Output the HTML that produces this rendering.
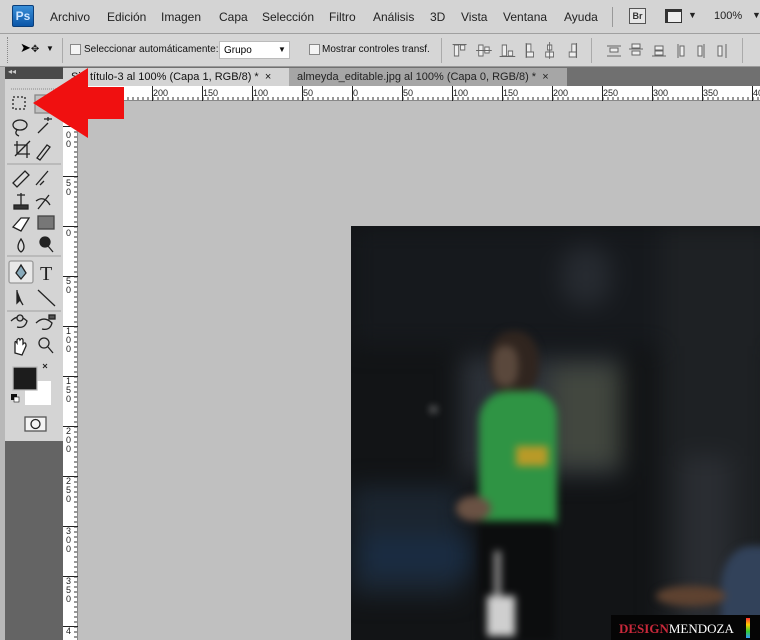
<!DOCTYPE html><html><head><meta charset="utf-8"><style>
*{margin:0;padding:0;box-sizing:border-box}
body{width:760px;height:640px;overflow:hidden;background:#c0c0c0;font-family:"Liberation Sans",sans-serif;position:relative}
.a{position:absolute}
.menu{left:0;top:0;width:760px;height:34px;background:#d4d4d4;border-bottom:1px solid #a0a0a0}
.menu span{position:absolute;top:10px;font-size:12px;color:#222}
.opt{left:0;top:34px;width:760px;height:33px;background:#d6d6d6;border-bottom:1px solid #9a9a9a}
.opt span{position:absolute;font-size:10px;color:#111;top:10px}
.cb{position:absolute;width:11px;height:11px;border:1px solid #888;background:#f4f4f4}
.sep{position:absolute;width:1px;background:#aaa}
.tabs{left:63px;top:67px;width:697px;height:19px;background:#707070}
</style></head><body>
<div class="a menu">
<div class="a" style="left:12px;top:5px;width:22px;height:22px;background:linear-gradient(#3a8fd8,#0b56a8);border:1px solid #0a3e7a;border-radius:2px;color:#cfe6ff;font-weight:bold;font-size:12px;text-align:center;line-height:20px">Ps</div>
<span style="left:50px">Archivo</span><span style="left:107px">Edición</span><span style="left:161px">Imagen</span><span style="left:219px">Capa</span><span style="left:262px">Selección</span><span style="left:329px">Filtro</span><span style="left:373px">Análisis</span><span style="left:430px">3D</span><span style="left:461px">Vista</span><span style="left:503px">Ventana</span><span style="left:564px">Ayuda</span>
<div class="a" style="left:612px;top:7px;width:1px;height:20px;background:#999"></div>
<div class="a" style="left:629px;top:8px;width:17px;height:16px;border:1px solid #555;background:#e6e6e6;font-size:9px;text-align:center;line-height:14px;font-weight:bold;color:#333">Br</div>
<div class="a" style="left:665px;top:9px;width:17px;height:14px;border:1px solid #333;border-top:3px solid #333;border-left:3px solid #333;background:#eee"></div>
<span style="left:688px;font-size:9px">▼</span>
<span style="left:714px;font-size:11px">100%</span><span style="left:752px;font-size:9px">▼</span>
</div>
<div class="a opt">
<div class="a" style="left:7px;top:3px;width:2px;height:26px;border-left:1px dotted #888"></div>
<div class="a" style="left:20px;top:6px;font-size:13px">➤<span style="font-size:10px;position:static">✥</span></div>
<span style="left:46px;font-size:8px">▼</span>
<div class="sep" style="left:62px;top:4px;height:25px"></div>
<div class="cb" style="left:70px;top:10px"></div><span style="left:84px">Seleccionar automáticamente:</span>
<div class="a" style="left:219px;top:7px;width:71px;height:18px;background:#fff;border:1px solid #bbb;font-size:10px;padding:3px 4px">Grupo<span style="left:58px;top:3px;font-size:8px">▼</span></div>
<div class="cb" style="left:309px;top:10px"></div><span style="left:322px">Mostrar controles transf.</span>
<div class="sep" style="left:441px;top:4px;height:25px"></div>
<div class="sep" style="left:591px;top:4px;height:25px"></div>
<div class="sep" style="left:742px;top:4px;height:25px"></div>
<svg class="a" style="left:450px;top:8px" width="300" height="18" stroke="#666" fill="#eee" stroke-width="1">
<g transform="scale(0.87,1)">
<rect x="5" y="3" width="5" height="11"/><rect x="12" y="3" width="5" height="5"/><line x1="3" y1="2.5" x2="19" y2="2.5"/>
<rect x="33" y="3" width="5" height="11"/><rect x="40" y="5" width="5" height="6"/><line x1="30" y1="8.5" x2="48" y2="8.5"/>
<rect x="60" y="3" width="5" height="11"/><rect x="67" y="9" width="5" height="5"/><line x1="57" y1="14.5" x2="75" y2="14.5"/>
<rect x="88" y="2" width="5" height="9"/><rect x="88" y="10" width="8" height="5"/><line x1="87.5" y1="1" x2="87.5" y2="16"/>
<rect x="112" y="3" width="5" height="5"/><rect x="110" y="10" width="9" height="5"/><line x1="114.5" y1="0" x2="114.5" y2="17"/>
<rect x="140" y="2" width="5" height="9"/><rect x="137" y="10" width="8" height="5"/><line x1="145.5" y1="1" x2="145.5" y2="16"/>
</g>
<g transform="translate(82,0)"><line x1="75" y1="4" x2="89" y2="4"/><rect x="78" y="6" width="8" height="4"/><line x1="75" y1="14" x2="89" y2="14"/>
<line x1="97" y1="7" x2="111" y2="7"/><rect x="100" y="2" width="8" height="4"/><rect x="100" y="9" width="8" height="4"/>
<line x1="120" y1="14" x2="134" y2="14"/><rect x="123" y="4" width="8" height="4"/><rect x="123" y="9" width="8" height="4"/>
<line x1="146" y1="2" x2="146" y2="16"/><rect x="148" y="4" width="4" height="10"/><rect x="166" y="4" width="4" height="10"/><line x1="172" y1="2" x2="172" y2="16"/>
<rect x="186" y="4" width="4" height="10"/><line x1="194" y1="2" x2="194" y2="16"/></g>
</svg>
</div>
<div class="a" style="left:0;top:67px;width:63px;height:573px;background:#646464"></div>
<div class="a" style="left:0;top:67px;width:5px;height:573px;background:#b8b8b8"></div>
<div class="a" style="left:5px;top:67px;width:58px;height:12px;background:#4a4a4a;color:#ccc;font-size:8px;padding-left:3px">◂◂</div>
<div class="a" style="left:5px;top:79px;width:58px;height:362px;background:#d4d4d4"></div>
<svg class="a" style="left:5px;top:85px" width="58" height="360" fill="none" stroke="#222" stroke-width="1.3">
<line x1="6" y1="4" x2="52" y2="4" stroke="#999" stroke-dasharray="1 1"/>
<rect x="8" y="12" width="12" height="12" stroke-dasharray="2 2"/>
<rect x="30" y="10" width="18" height="18" fill="#c0c0c0" stroke="#888"/>
<ellipse cx="15" cy="40" rx="7" ry="5"/><path d="M12 45 q-3 4 2 6"/>
<path d="M33 48 L43 38 M43 32 v4 M39 34 h8"/>
<path d="M12 56 v13 h13 M9 60 h13 v13 M10 71 L25 56"/>
<path d="M32 73 L42 60 l3 2 L35 75 z"/>
<line x1="2" y1="79" x2="56" y2="79" stroke="#aaa"/>
<path d="M8 98 L20 86 l4 4 L12 102 z" fill="#ddd"/>
<path d="M31 100 L43 86 M35 100 l4 -4"/>
<rect x="9" y="120" width="14" height="4" fill="#333"/><path d="M16 108 v12 M12 110 h8"/>
<path d="M33 124 L44 110 M31 116 q8 -6 14 4"/>
<path d="M8 142 L16 133 h8 L16 146 z" fill="#fff"/>
<rect x="33" y="131" width="16" height="13" fill="#777" stroke="#444"/>
<path d="M16 154 q-6 9 0 13 q6 -4 0 -13z" fill="#ddd"/>
<circle cx="40" cy="157" r="5" fill="#222"/><line x1="43" y1="161" x2="48" y2="167"/>
<line x1="2" y1="171" x2="56" y2="171" stroke="#aaa"/>
<rect x="4" y="176" width="24" height="22" fill="#e8e8e8" stroke="#999" rx="2"/>
<path d="M16 180 l-5 8 5 6 5 -6z" fill="#8ab"/>
<text x="35" y="195" font-family="Liberation Serif" font-size="20" fill="#222" stroke="none">T</text>
<path d="M12 205 v13 l3 -3 3 5" fill="#222"/>
<line x1="33" y1="205" x2="50" y2="221"/>
<line x1="2" y1="226" x2="56" y2="226" stroke="#aaa"/>
<path d="M6 236 q8 -8 16 0 q-2 8 -10 6" /><circle cx="15" cy="233" r="3" fill="#ccc"/>
<path d="M31 238 q8 -8 16 0 q-2 8 -10 6"/><rect x="44" y="230" width="6" height="4" fill="#555"/>
<path d="M10 268 v-10 q0 -3 2 0 v-3 q2 -3 3 0 q2 -3 3 0 v4 q3 -3 3 2 l-4 9z" fill="#fff"/>
<circle cx="39" cy="258" r="5"/><line x1="43" y1="262" x2="48" y2="268"/>
<rect x="20" y="296" width="26" height="24" fill="#fff" stroke="none"/>
<rect x="8" y="282" width="24" height="23" fill="#1c1c1c" stroke="#bbb"/>
<path d="M38 279 l4 4 M42 279 l-4 4" stroke-width="1"/>
<rect x="6" y="309" width="6" height="6" fill="#111" stroke="none"/><rect x="9" y="312" width="5" height="5" fill="#fff" stroke="#111" stroke-width=".6"/>
<rect x="20" y="332" width="21" height="14" fill="#f4f4f4" stroke="#555"/><circle cx="30.5" cy="339" r="4.5"/>
</svg>
<div class="a tabs"></div>
<div class="a" style="left:63px;top:68px;width:226px;height:18px;background:#d4d4d4;font-size:11px;padding:3px 0 0 8px;color:#111;white-space:nowrap">Sin título-3 al 100% (Capa 1, RGB/8) * &nbsp;×</div>
<div class="a" style="left:289px;top:68px;width:278px;height:18px;background:#a6a6a6;font-size:11px;padding:3px 0 0 8px;color:#222;white-space:nowrap">almeyda_editable.jpg al 100% (Capa 0, RGB/8) * &nbsp;×</div>
<svg class="a" style="left:63px;top:86px" width="697" height="554">
<rect x="0" y="0" width="697" height="15" fill="#fff"/>
<rect x="0" y="0" width="15" height="554" fill="#fff"/>
<line x1="0" y1="14.5" x2="697" y2="14.5" stroke="#888"/>
<line x1="14.5" y1="14" x2="14.5" y2="554" stroke="#888"/>
<g font-size="9" fill="#222" font-family="Liberation Sans">
<text x="90" y="10">200</text><text x="140" y="10">150</text><text x="190" y="10">100</text><text x="240" y="10">50</text><text x="290" y="10">0</text><text x="340" y="10">50</text><text x="390" y="10">100</text><text x="440" y="10">150</text><text x="490" y="10">200</text><text x="540" y="10">250</text><text x="590" y="10">300</text><text x="640" y="10">350</text><text x="690" y="10">400</text>
</g>
<g font-size="9" fill="#222" font-family="Liberation Sans">
<text x="3" y="52">0</text><text x="3" y="61">0</text>
<text x="3" y="100">5</text><text x="3" y="109">0</text>
<text x="3" y="150">0</text>
<text x="3" y="198">5</text><text x="3" y="207">0</text>
<text x="3" y="248">1</text><text x="3" y="257">0</text><text x="3" y="266">0</text>
<text x="3" y="298">1</text><text x="3" y="307">5</text><text x="3" y="316">0</text>
<text x="3" y="348">2</text><text x="3" y="357">0</text><text x="3" y="366">0</text>
<text x="3" y="398">2</text><text x="3" y="407">5</text><text x="3" y="416">0</text>
<text x="3" y="448">3</text><text x="3" y="457">0</text><text x="3" y="466">0</text>
<text x="3" y="498">3</text><text x="3" y="507">5</text><text x="3" y="516">0</text>
<text x="3" y="548">4</text>
</g>
<path stroke="#222" fill="none" d="
M89.5 0v15 M139.5 0v15 M189.5 0v15 M239.5 0v15 M289.5 0v15 M339.5 0v15 M389.5 0v15 M439.5 0v15 M489.5 0v15 M539.5 0v15 M589.5 0v15 M639.5 0v15 M689.5 0v15
M0 40.5h15 M0 90.5h15 M0 140.5h15 M0 190.5h15 M0 240.5h15 M0 290.5h15 M0 340.5h15 M0 390.5h15 M0 440.5h15 M0 490.5h15 M0 540.5h15"/>
<line x1="14.5" y1="12.5" x2="697" y2="12.5" stroke="#333" stroke-width="3" stroke-dasharray="1 4"/>
<line x1="12.5" y1="15.5" x2="12.5" y2="554" stroke="#333" stroke-width="3" stroke-dasharray="1 4"/>
</svg>
<div class="a" style="left:351px;top:226px;width:409px;height:414px;background:#121416;overflow:hidden">
<div class="a" style="left:-20px;top:-20px;width:460px;height:460px;filter:blur(12px)">
<div class="a" style="left:20px;top:20px;width:440px;height:120px;background:#16191d"></div>
<div class="a" style="left:230px;top:40px;width:50px;height:60px;background:#262a30;border-radius:40%"></div>
<div class="a" style="left:330px;top:20px;width:110px;height:420px;background:#1e2124"></div>
<div class="a" style="left:350px;top:250px;width:50px;height:200px;background:#2a2d32"></div>
<div class="a" style="left:130px;top:150px;width:160px;height:120px;background:#2c3138"></div>
<div class="a" style="left:220px;top:160px;width:70px;height:100px;background:#42473f"></div>
<div class="a" style="left:20px;top:280px;width:110px;height:110px;background:#1b2530"></div>
<div class="a" style="left:30px;top:330px;width:110px;height:40px;background:#1a2c42"></div>
</div>
<div class="a" style="left:0;top:0;width:409px;height:414px;filter:blur(4px)">
<div class="a" style="left:138px;top:105px;width:50px;height:65px;background:#30251f;border-radius:45%"></div>
<div class="a" style="left:142px;top:120px;width:25px;height:40px;background:#5a483c;border-radius:40%"></div>
<div class="a" style="left:128px;top:165px;width:78px;height:135px;background:#2f9444;border-radius:30px 25px 5px 5px"></div>
<div class="a" style="left:165px;top:220px;width:32px;height:20px;background:#b89a28"></div>
<div class="a" style="left:105px;top:270px;width:35px;height:25px;background:#6a5244;border-radius:50%"></div>
<div class="a" style="left:128px;top:295px;width:75px;height:120px;background:#0c0d0e"></div>
<div class="a" style="left:136px;top:370px;width:28px;height:40px;background:#cfcfcf"></div>
<div class="a" style="left:143px;top:325px;width:7px;height:45px;background:#8a8a8a"></div>
<div class="a" style="left:80px;top:181px;width:5px;height:5px;background:#ddd;border-radius:50%"></div>
<div class="a" style="left:370px;top:320px;width:60px;height:80px;background:#32425a;border-radius:50% 0 0 0"></div>
<div class="a" style="left:305px;top:360px;width:70px;height:20px;background:#5e4230;border-radius:50%"></div>
</div>
<div class="a" style="left:260px;top:389px;width:149px;height:25px;background:#050505;font-size:13px;padding:6px 0 0 8px;white-space:nowrap"><span style="color:#c8283a;font-weight:bold;font-family:'Liberation Serif'">DESIGN</span><span style="color:#fff;font-family:'Liberation Serif'">MENDOZA</span></div>
<div class="a" style="left:395px;top:392px;width:4px;height:20px;background:linear-gradient(#f33,#fc0,#3c3,#39f)"></div>
</div>
<svg class="a" style="left:0;top:0" width="140" height="150"><path d="M33 103 L88 68 L88 87 L124 87 L124 119 L88 119 L88 138 Z" fill="#f01010"/></svg>
</body></html>
